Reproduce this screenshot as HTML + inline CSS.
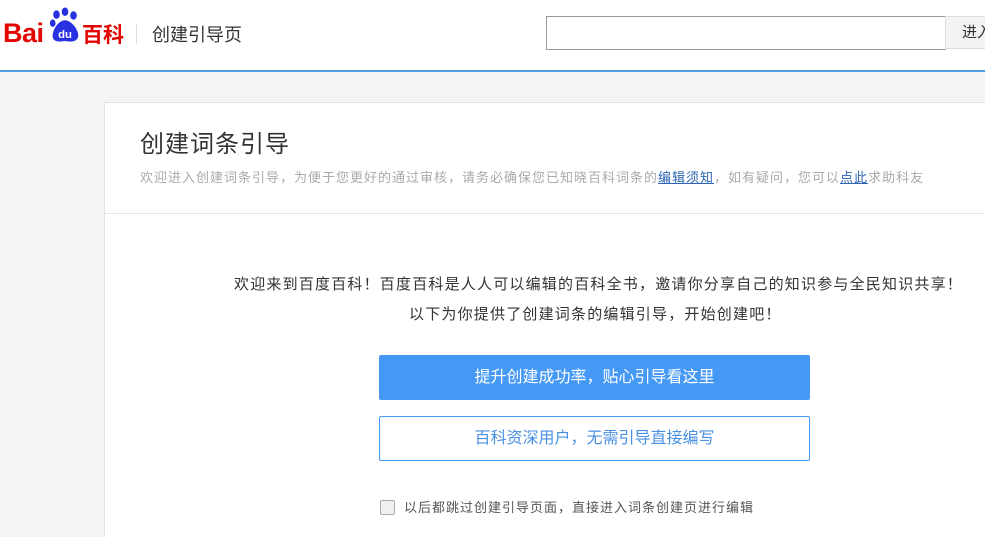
<!DOCTYPE html>
<html style="height:537px;overflow:hidden"><head><meta charset="utf-8"><style>
body{margin:0;width:985px;height:537px;overflow:hidden;background:#f4f4f4;font-family:"Liberation Sans","Noto Sans CJK SC",sans-serif;position:relative}
.hdr{position:absolute;left:0;top:0;width:985px;height:70px;background:#fff;border-bottom:2px solid #4e9fe3}
.abs{position:absolute;white-space:nowrap}
.card{position:absolute;left:104px;top:102px;width:880px;height:434px;background:#fff;border:1px solid #e3e3e3;border-right:none;border-bottom:none;overflow:hidden}
</style></head><body>
<div class="hdr">
  <div class="abs" style="left:3px;top:18px;font:bold 27px 'Liberation Sans',sans-serif;color:#e10602;letter-spacing:-0.5px">Bai</div>
  <svg class="abs" style="left:48px;top:5px" width="34" height="40" viewBox="0 0 36 40">
    <ellipse cx="9" cy="9" rx="3.5" ry="4.5" fill="#2932e1"/><ellipse cx="18" cy="6" rx="3.5" ry="4.5" fill="#2932e1"/><ellipse cx="27" cy="10" rx="3.5" ry="4.5" fill="#2932e1"/><ellipse cx="5" cy="18" rx="3" ry="4" fill="#2932e1"/>
    <path d="M18 15 C11 15 4 26 5 33 C6 38 12 38 18 37 C24 38 31 38 32 32 C33 26 25 15 18 15Z" fill="#2932e1"/>
    <text x="18" y="34" text-anchor="middle" font-family="Liberation Sans" font-weight="bold" font-size="12" fill="#fff">du</text>
  </svg>
  <div class="abs" style="left:82px;top:20px;font:bold 21px 'Noto Sans CJK SC',sans-serif;color:#e10602;line-height:28px">百科</div>
  <div class="abs" style="left:136px;top:24px;width:1px;height:20px;background:#ddd"></div>
  <div class="abs" style="left:152px;top:22px;font-size:18px;color:#333;line-height:26px">创建引导页</div>
  <div class="abs" style="left:546px;top:16px;width:398px;height:32px;border:1px solid #999;background:#fff"></div>
  <div class="abs" style="left:945px;top:16px;width:40px;height:33px;background:#f3f3f3;border:1px solid #ddd;border-right:none;box-sizing:border-box;font-size:15px;color:#333;line-height:31px;padding-left:16px;overflow:hidden">进入</div>
</div>
<div class="card">
  <div class="abs" style="left:35px;top:25px;font-size:24px;color:#333;line-height:34px;letter-spacing:1px">创建词条引导</div>
  <div class="abs" style="left:35px;top:65px;font-size:13px;color:#aaa;line-height:20px;letter-spacing:1px">欢迎进入创建词条引导，为便于您更好的通过审核，请务必确保您已知晓百科词条的<span style="color:#2d64b3;text-decoration:underline">编辑须知</span>，如有疑问，您可以<span style="color:#2d64b3;text-decoration:underline">点此</span>求助科友</div>
  <div class="abs" style="left:0;top:110px;width:900px;height:1px;background:#e5e5e5"></div>
  <div class="abs" style="left:129px;top:171px;font-size:15px;color:#333;line-height:22px;letter-spacing:1.2px">欢迎来到百度百科！百度百科是人人可以编辑的百科全书，邀请你分享自己的知识参与全民知识共享！</div>
  <div class="abs" style="left:304px;top:201px;font-size:15px;color:#333;line-height:22px;letter-spacing:1.2px">以下为你提供了创建词条的编辑引导，开始创建吧！</div>
  <div class="abs" style="left:274px;top:252px;width:431px;height:45px;background:#4599f4;border-radius:2px;color:#fff;font-size:16px;line-height:45px;text-align:center">提升创建成功率，贴心引导看这里</div>
  <div class="abs" style="left:274px;top:313px;width:429px;height:43px;border:1px solid #4599f4;border-radius:2px;color:#4a90e2;font-size:16px;line-height:43px;text-align:center">百科资深用户，无需引导直接编写</div>
  <div class="abs" style="left:275px;top:397px;width:13px;height:13px;border:1px solid #aaa;border-radius:2px;background:#f0f0f0"></div>
  <div class="abs" style="left:299px;top:395px;font-size:13px;color:#555;line-height:20px;letter-spacing:1px">以后都跳过创建引导页面，直接进入词条创建页进行编辑</div>
</div>
</body></html>
